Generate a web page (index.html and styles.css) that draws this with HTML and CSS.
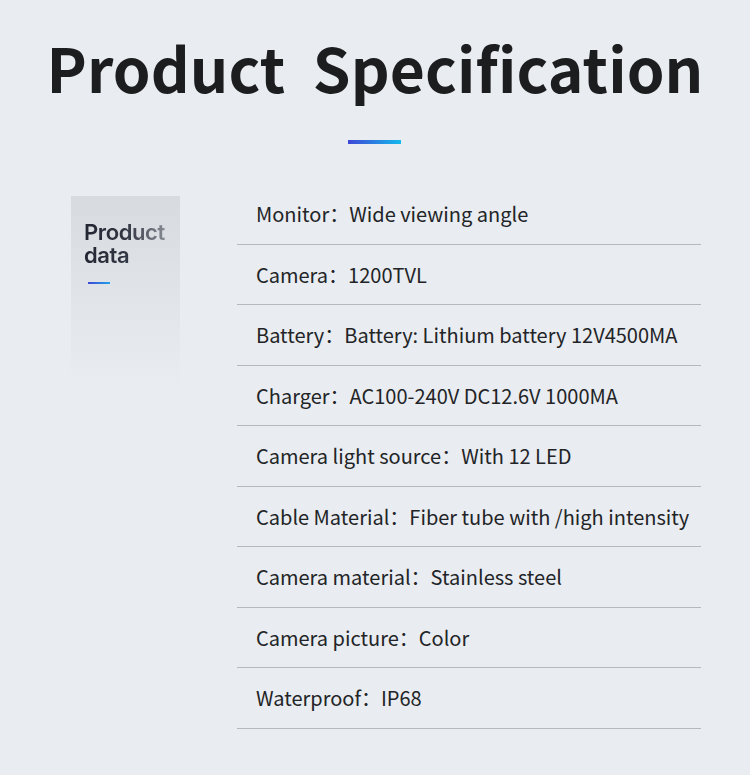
FILE: index.html
```html
<!DOCTYPE html>
<html lang="en">
<head>
<meta charset="utf-8">
<title>Product Specification</title>
<link rel="stylesheet" href="styles.css">
</head>
<body>
<div class="page">
  <h1 class="title">Product&nbsp; Specification</h1>
  <div class="accent"></div>
  <div class="spec">
    <aside class="card">
      <div class="card-title">Product<br>data</div>
      <div class="card-line"></div>
    </aside>
    <ul class="rows">
      <li class="row">Monitor：Wide viewing angle</li>
      <li class="row">Camera：1200TVL</li>
      <li class="row">Battery：Battery: Lithium battery 12V4500MA</li>
      <li class="row">Charger：AC100-240V DC12.6V 1000MA</li>
      <li class="row">Camera light source：With 12 LED</li>
      <li class="row">Cable Material：Fiber tube with /high intensity</li>
      <li class="row">Camera material：Stainless steel</li>
      <li class="row">Camera picture：Color</li>
      <li class="row">Waterproof：IP68</li>
    </ul>
  </div>
</div>
</body>
</html>
```
FILE: styles.css
```css
html, body {
  margin: 0;
  padding: 0;
  background: #e9ecf0;
}
.page {
  width: 750px;
  height: 775px;
  overflow: hidden;
  font-family: "Noto Sans CJK SC", "Noto Sans", sans-serif;
  color: #222427;
}
.title {
  margin: 37px 0 0;
  font-size: 60.5px;
  line-height: 60px;
  height: 60px;
  font-weight: 700;
  text-align: center;
  color: #1c1d1f;
  letter-spacing: 0.1px;
}
.accent {
  width: 53px;
  height: 4px;
  margin: 43px 0 0 348px;
  background: linear-gradient(90deg, #3f47d6, #14b9ec);
}
.spec {
  display: flex;
  padding-top: 40px;
}
.card {
  width: 109px;
  height: 190px;
  margin: 12px 0 0 71px;
  box-sizing: border-box;
  padding: 25px 0 0 13px;
  background: linear-gradient(180deg, #d7dade 0%, #e1e4e8 55%, #e9ecf0 100%);
}
.card-title {
  font-family: "Inter", "Lato", sans-serif;
  font-weight: 600;
  font-size: 22px;
  line-height: 23px;
  letter-spacing: -0.4px;
  background: linear-gradient(90deg, #222632 0%, #323744 45%, #a6aab1 100%);
  -webkit-background-clip: text;
  background-clip: text;
  color: transparent;
}
.card-line {
  width: 22px;
  height: 2px;
  margin: 15px 0 0 4px;
  background: linear-gradient(90deg, #3f47d6, #1fa2e8);
}
.rows {
  list-style: none;
  margin: 0 0 0 57px;
  padding: 0;
  width: 464px;
}
.row {
  display: flex;
  align-items: center;
  height: 60.5px;
  box-sizing: border-box;
  padding: 0 0 0 19px;
  border-bottom: 1px solid #b5b9be;
  font-size: 20px;
  white-space: nowrap;
}
```
